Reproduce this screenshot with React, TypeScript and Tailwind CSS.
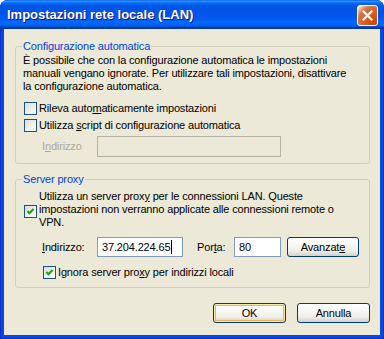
import React from "react";

const F = "font-['Liberation_Sans',Arial,sans-serif]";

function Check({ checked, className = "" }: { checked?: boolean; className?: string }) {
  return (
    <span
      className={`relative inline-block w-[13px] h-[13px] shrink-0 border border-[#1C5180] bg-[linear-gradient(135deg,#dcdcd7,#ffffff)] ${className}`}
    >
      {checked && (
        <svg className="absolute left-0 top-0" width="11" height="11" viewBox="0 0 11 11">
          <polyline points="2.5,5 4.5,7.2 8.5,3" fill="none" stroke="#21A121" strokeWidth="2.2" />
        </svg>
      )}
    </span>
  );
}

function Btn({ children, def }: { children: React.ReactNode; def?: boolean }) {
  return (
    <div
      className={`h-[20px] w-[73px] rounded-[3px] border border-[#003C74] bg-[linear-gradient(to_bottom,#ffffff,#f0f0ea_70%,#d6d0c5)] flex items-center justify-center text-[11px] text-black ${
        def ? "shadow-[inset_0_0_0_1px_#fde7a6,inset_0_0_0_2px_#f0b44b]" : ""
      }`}
    >
      {children}
    </div>
  );
}

export default function App() {
  return (
    <div className={`w-[384px] h-[339px] rounded-t-[8px] overflow-hidden flex flex-col bg-[#0a47dc] shadow-[inset_1px_0_#0831d9,inset_-1px_0_#0831d9,inset_0_-1px_#0831d9] ${F}`}>
      <div className="relative h-[29px] shrink-0 flex items-center pl-[7px] bg-[linear-gradient(to_bottom,#0058ee_0%,#3593ff_4%,#288eff_6%,#127dff_8%,#036ffc_10%,#0262ee_14%,#0057e5_20%,#0054e3_24%,#0055eb_56%,#005bf5_66%,#026afe_76%,#0062ef_86%,#0052d6_92%,#0040ab_94%,#003092_100%)]">
        <span className="text-white font-bold text-[13px] leading-none [text-shadow:1px_1px_#0f1089]">
          Impostazioni rete locale (LAN)
        </span>
        <div className="absolute right-[6px] top-[5px] w-[21px] h-[21px] rounded-[3px] border border-white bg-[radial-gradient(circle_at_90%_90%,#cc4600_0%,#dc6527_55%,#cd7546_70%,#ffccb2_90%,#ffffff_100%)] flex items-center justify-center">
          <svg width="11" height="11" viewBox="0 0 11 11">
            <path d="M1.5 1.5 L9.5 9.5 M9.5 1.5 L1.5 9.5" stroke="white" strokeWidth="2.2" strokeLinecap="square" />
          </svg>
        </div>
      </div>
      <div className="flex-1 mx-[4px] mb-[4px] bg-[#ECE9D8] flex flex-col pl-[11px] pr-[10px] pt-[11px] pb-[12px] text-[11px] leading-[13px] tracking-[-0.15px] text-black">
        <fieldset className="border border-[#D0D0BF] rounded-[3px] px-[6px] pb-[6px]">
          <legend className="px-[1px] text-[#0046D5]">Configurazione automatica</legend>
          <p className="mt-[1px] ml-[1px] whitespace-nowrap">
            È possibile che con la configurazione automatica le impostazioni
            <br />
            manuali vengano ignorate. Per utilizzare tali impostazioni, disattivare
            <br />
            la configurazione automatica.
          </p>
          <div className="mt-[9px] ml-[2px] flex items-center gap-[2px]">
            <Check />
            <span>
              Rileva auto<span className="underline">m</span>aticamente impostazioni
            </span>
          </div>
          <div className="mt-[4px] ml-[2px] flex items-center gap-[2px]">
            <Check />
            <span>
              Utilizza <span className="underline">s</span>cript di configurazione automatica
            </span>
          </div>
          <div className="mt-[4px] flex items-center">
            <span className="w-[75px] pl-[20px] text-[#ACA899]">
              I<span className="underline">n</span>dirizzo
            </span>
            <div className="h-[21px] w-[184px] border border-[#B5B2A6]" />
          </div>
        </fieldset>

        <fieldset className="mt-[9px] border border-[#D0D0BF] rounded-[3px] px-[6px] pb-[8px]">
          <legend className="px-[1px] text-[#0046D5]">Server proxy</legend>
          <div className="mt-[4px] ml-[2px] flex items-center gap-[2px]">
            <Check checked className="mt-[3px]" />
            <p className="whitespace-nowrap">
              Utilizza un server prox<span className="underline">y</span> per le connessioni LAN. Queste
              <br />
              impostazioni non verranno applicate alle connessioni remote o
              <br />
              VPN.
            </p>
          </div>
          <div className="mt-[8px] flex items-center">
            <span className="w-[75px] pl-[20px]">
              <span className="underline">I</span>ndirizzo:
            </span>
            <div className="relative h-[20px] w-[86px] border border-[#7F9DB9] bg-white flex items-center pl-[4px]">
              <span>37.204.224.65</span>
              <span className="ml-[1px] w-[1px] h-[14px] bg-black" />
            </div>
            <span className="ml-[14px] w-[37px]">
              Por<span className="underline">t</span>a:
            </span>
            <div className="h-[20px] w-[47px] border border-[#7F9DB9] bg-white flex items-center pl-[4px]">80</div>
            <div className="ml-[6px]">
              <div className="h-[20px] w-[72px] rounded-[3px] border border-[#003C74] bg-[linear-gradient(to_bottom,#ffffff,#f0f0ea_70%,#d6d0c5)] flex items-center justify-center">
                <span>
                  Avanzat<span className="underline">e</span>
                </span>
              </div>
            </div>
          </div>
          <div className="mt-[9px] ml-[21px] flex items-center gap-[2px]">
            <Check checked />
            <span>
              Ignora server pro<span className="underline">x</span>y per indirizzi locali
            </span>
          </div>
        </fieldset>

        <div className="mt-auto flex justify-end gap-[11px]">
          <Btn def>OK</Btn>
          <Btn>Annulla</Btn>
        </div>
      </div>
    </div>
  );
}
